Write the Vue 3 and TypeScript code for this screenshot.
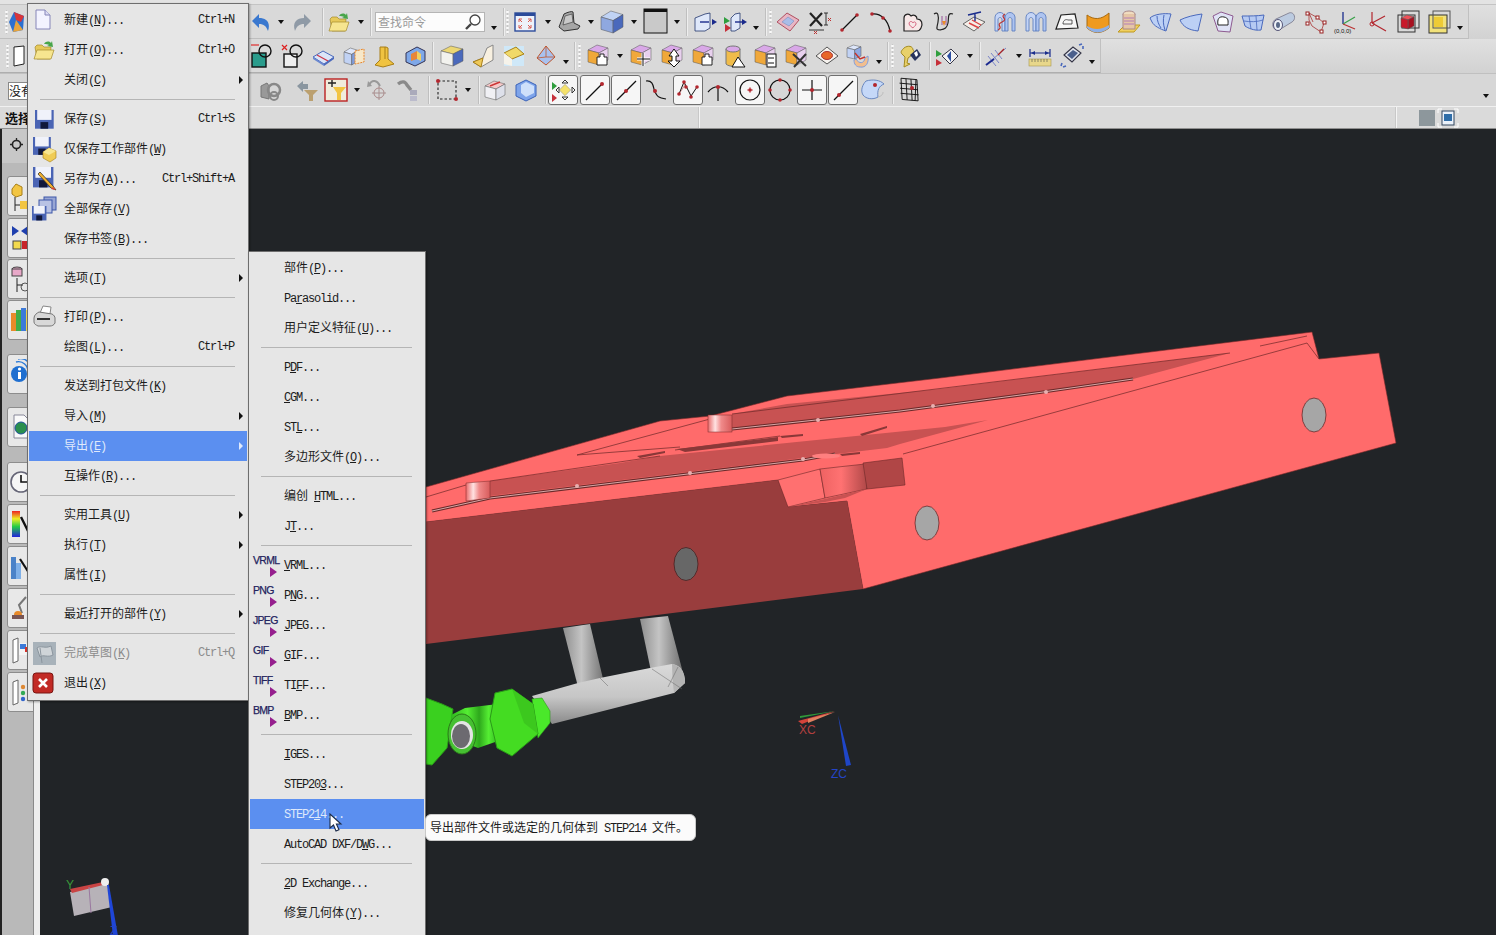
<script setup lang="ts">
type Item = { k: string; c: number; b?: boolean };
type Placed = Item & { ml: number; w: number };

const box = (x: number, y: number, w: number, h: number, top: string, left: string, right: string, d = 5) =>
  `<polygon points="${x},${y + d} ${x + w * 0.55},${y + d * 1.6} ${x + w},${y + d * 0.6} ${x + w * 0.45},${y}" fill="${top}" stroke="#555" stroke-width=".5"/>` +
  `<polygon points="${x},${y + d} ${x + w * 0.55},${y + d * 1.6} ${x + w * 0.55},${y + h} ${x},${y + h - d * 0.6}" fill="${left}" stroke="#555" stroke-width=".5"/>` +
  `<polygon points="${x + w * 0.55},${y + d * 1.6} ${x + w},${y + d * 0.6} ${x + w},${y + h - d} ${x + w * 0.55},${y + h}" fill="${right}" stroke="#555" stroke-width=".5"/>`;
const dot = (x: number, y: number, r = 1.8, f = "#b3262e") => `<circle cx="${x}" cy="${y}" r="${r}" fill="${f}"/>`;
const ln = (d: string, s = "#111", w = 1.2) => `<path d="${d}" fill="none" stroke="${s}" stroke-width="${w}"/>`;
const hand = (x: number, y: number) => `<path d="M${x} ${y + 3}h3v-3h4v3h3v8h-10z" fill="#fff" stroke="#111" stroke-width=".9"/>`;
const folder = `<path d="M3 9l2-2h5l2 2h7l-1 12H5z" fill="#e6c95a" stroke="#a48a2c" stroke-width=".7"/><path d="M2 21l3-9h17l-3 9z" fill="#f6e58f" stroke="#a48a2c" stroke-width=".7"/><path d="M12 6c2-3 5-3 7-1l1-2 1 6-6-1 2-1c-1-1-3-1-5-1z" fill="#48a54a"/>`;
const disk = (x: number, y: number, s = 1) =>
  `<g transform="translate(${x} ${y}) scale(${s})"><rect width="17" height="17" fill="#4a64b4"/><rect x="2" width="13" height="9" fill="#f0f2fa"/><rect x="5" y="11" width="7" height="6" fill="#11183a"/></g>`;
const arrowPanel = (tri: boolean) =>
  (tri ? `<polygon points="1,7 7,11 1,14" fill="#2f9e3e"/><polygon points="2,14 8,18 2,22" fill="#c6303a"/>` : "") +
  `<polygon points="${tri ? 8 : 2},8 12,4 17,3 17,18 12,21 ${tri ? 8 : 2},21" fill="#dfe8fa" stroke="#22356b" stroke-width=".8"/><path d="M${tri ? 12 : 7} 12h9" stroke="#1a2a8c" stroke-width="1.4"/><polygon points="19,9 24,12 19,15" fill="#1a2a8c"/>`;
const bluArch = (x = 0) =>
  `<path d="M${x + 2} 21V7c1-6 9-6 10 0v14h-3V9c-1-2-3-2-4 0v12z" fill="#c5d5f6" stroke="#5f7fc0" stroke-width=".9"/><path d="M${x + 12} 21V7c1-6 9-6 10 0v14h-3V9c-1-2-3-2-4 0v12z" fill="#aec4f0" stroke="#5f7fc0" stroke-width=".9"/>`;

const I: Record<string, string> = {
  undo: `<path d="M3 11l7-7v4c7 0 12 4 9 13-2-5-4-7-9-7v4z" fill="#3a78cf"/>`,
  redo: `<path d="M21 11l-7-7v4c-7 0-12 4-9 13 2-5 4-7 9-7v4z" fill="#8f9aa6"/>`,
  folder,
  logo: `<polygon points="6,2 16,6 15,20 5,22 1,12" fill="#2b6fd0"/><polygon points="6,2 16,6 13,12 8,10" fill="#d8353a"/><polygon points="8,10 15,20 5,22" fill="#e7a43c"/>`,
  page: `<polygon points="4,3 14,2 14,20 4,22" fill="#fff" stroke="#222"/>`,
  fit: `<rect x="2" y="3" width="20" height="18" fill="#eef2fa" stroke="#2b4b9a" stroke-width="1.4"/><rect x="2" y="3" width="20" height="3" fill="#2b4b9a"/>${ln("M6 9l3 3M6 9v3M6 9h3M18 9l-3 3M18 9v3M18 9h-3M6 18l3-3M6 18v-3M6 18h3M18 18l-3-3M18 18v-3M18 18h-3", "#d85a50", 1)}`,
  shade: `<path d="M6 4c4-2 8-3 9-2l1 11 6 3-2 3-14 2-5-4z" fill="#a6a6a6" stroke="#333"/><path d="M7 6l7-2 1 8-10 3z" fill="#c9c9c9" stroke="#333" stroke-width=".6"/>`,
  cube: box(1, 1, 22, 22, "#c0d3f5", "#8fa8e0", "#4a69bc", 6),
  gsq: `<rect x="1" y="-1" width="23" height="24" fill="#c9c9c9" stroke="#111"/><rect x="1" y="-1" width="23" height="3" fill="#111"/>`,
  pan1: arrowPanel(false),
  pan2: arrowPanel(true),
  surf: `<polygon points="1,12 11,3 23,10 14,21" fill="#e7b6c4" stroke="#b05060"/><polygon points="6,12 12,7 18,11 13,16" fill="#a9bde8" stroke="#7a8fc0" stroke-width=".6"/>`,
  xdim: `${ln("M3 3L15 16M15 3L3 16", "#222", 2.2)}${ln("M2 20H17M17 3H21M19 3V15M17 15H21", "#222", .9)}${ln("M21 8l3 3M24 8l-3 3M7 21l3 3M10 21l-3 3", "#b33", 1)}`,
  line: `${ln("M4 20L19 5")}${dot(4, 20)}${dot(19, 5)}`,
  arc: `${ln("M3 4C12 3 19 10 21 21")}${dot(3, 4)}${dot(14, 8)}${dot(21, 21)}`,
  heart: `<path d="M4 21V8c0-4 5-5 7-2 3-2 6 0 6 3 5 0 6 5 4 9-1 2-3 3-4 3z" fill="#f7e8e8" stroke="#222" stroke-width="1.2"/><path d="M9 13c1-2 3-2 4 0 1-2 3-1 3 1s-3 3-3 4c-1-1-4-2-4-5z" fill="none" stroke="#c46" stroke-width=".8"/>`,
  curve: `${ln("M3 4c4-3 5 2 4 8s-3 8 3 8M22 4c-6-2-4 4-5 9s-3 6-8 7", "#222")}${ln("M11 6v9M15 6v9", "#838", .8)}<polygon points="11,11 15,11 13,16" fill="#e88a2a"/>`,
  plane: `<polygon points="1,14 12,7 23,12 12,21" fill="#f5eee8" stroke="#666"/>${ln("M7 13l10 5M10 10l9 5", "#d44", 1.4)}${ln("M6 5l13-3M13 3v8", "#1a2c8c", 1.4)}`,
  arch1: `${bluArch()}${ln("M5 20c6-3-3-5 4-8s-3-5 3-8", "#b33", 1.2)}`,
  arch2: bluArch(),
  para: `<polygon points="1,19 6,5 20,4 23,18" fill="#f7f7f7" stroke="#222" stroke-width="1.2"/>${ln("M8 14c0-4 3-5 5-4h4v4z", "#333", .8)}`,
  osurf: `<path d="M1 5c7 5 14 5 22-2v15c-8 6-15 6-22 0z" fill="#ef9a1f" stroke="#a86a10"/><path d="M1 16c7 4 14 4 22-1v3c-8 6-15 6-22 0z" fill="#8fb0e6"/>`,
  cylp: `<polygon points="1,22 8,15 23,15 17,22" fill="#f0d060" stroke="#c09a20"/><ellipse cx="12" cy="4" rx="6" ry="3" fill="#f0dcc0" stroke="#a88"/><path d="M6 4v15h12V4" fill="#e6c6a6" stroke="#a88"/>${ln("M7 8h10M7 11h10M7 14h10", "#a569bd", .8)}`,
  ribs: `<path d="M2 8c4-4 15-5 21-4l-5 17c-6-2-12-5-14-9z" fill="#bcd0f5" stroke="#4a69bc"/>${ln("M9 6c0 5 2 9 4 12M16 5c-1 5-1 9 1 15", "#4a69bc", 1)}`,
  bsurf: `<path d="M1 10c6-3 14-5 22-6l-4 17C10 20 4 17 1 10z" fill="#bcd0f5" stroke="#4a69bc"/>`,
  msurf: `<polygon points="3,6 11,2 23,6 20,22 8,21" fill="#dfe2f5" stroke="#8d5a90"/><path d="M8 15c-1-6 1-9 6-8s4 4 4 8z" fill="#fff" stroke="#222"/>`,
  mesh: `<path d="M1 6c8 0 15 0 22-1l-3 15C13 21 7 18 4 16z" fill="#b6caf2" stroke="#4a69bc"/>${ln("M8 6l2 13M15 6l1 14M3 11c6 1 13 1 19-1", "#4a69bc", .8)}`,
  tube: `<path d="M4 9L17 3c5-2 8 6 3 9L7 20c-6 2-9-8-3-11z" fill="#bccbe0" stroke="#889"/><ellipse cx="6" cy="15" rx="4.5" ry="5.5" fill="#eef2f8" stroke="#557"/><ellipse cx="6" cy="15" rx="2" ry="3" fill="#5a6a88"/>`,
  pts: `${ln("M6 3l9 5 6 5-3 9-9-6-3-6zM6 3l4 9", "#a33", .8)}<g fill="#fff" stroke="#922" stroke-width="1"><rect x="3" y="2" width="3" height="3"/><rect x="13" y="6" width="3" height="3"/><rect x="20" y="11" width="3" height="3"/><rect x="3" y="12" width="3" height="3"/><rect x="17" y="20" width="3" height="3"/></g>`,
  axes0: `${ln("M9 14V2", "#1a2c8c", 1.3)}${ln("M9 14L21 7", "#39a24a", 1.3)}${ln("M9 14L21 19", "#b33", 1.3)}<text x="0" y="23" class="tiny">(0,0,0)</text>`,
  axesr: `${ln("M7 13V2M7 13L20 6M7 13l14 8", "#b3262e", 1.2)}<circle cx="7" cy="14" r="2" fill="none" stroke="#b3262e"/>`,
  redc: `<rect x="2" y="5" width="17" height="17" fill="none" stroke="#333"/><rect x="6" y="1" width="17" height="17" fill="none" stroke="#333"/>${box(5, 5, 13, 14, "#f25058", "#c9182a", "#a81020", 3)}`,
  yelc: `<rect x="2" y="5" width="18" height="18" fill="#f2e27a" stroke="#333"/><rect x="6" y="1" width="17" height="17" fill="none" stroke="#555"/><rect x="7" y="7" width="9" height="10" fill="#eecb35"/>`,
  r2a: `<rect x="2" y="9" width="14" height="14" fill="#2a9c8c" stroke="#111" stroke-width="1.4"/><circle cx="15" cy="7" r="6" fill="none" stroke="#111" stroke-width="1.4"/>${ln("M1 1l8 0", "#d44", 1.4)}`,
  r2b: `<rect x="3" y="10" width="13" height="13" fill="#eee" stroke="#111" stroke-width="1.4"/><circle cx="15" cy="7" r="6" fill="none" stroke="#111" stroke-width="1.4"/>${ln("M1 1l5 5M6 1L1 6", "#d22", 1.2)}`,
  r2c: `<polygon points="2,13 12,7 23,13 13,20" fill="#dbe5f8" stroke="#4a69bc"/>${ln("M6 11l11 6", "#c34", 1.2)}<polygon points="2,13 13,20 13,22 2,15" fill="#6a88d0"/><polygon points="13,20 23,13 23,15 13,22" fill="#4a69bc"/>`,
  r2d: `${box(2, 4, 14, 17, "#dde6fa", "#c1d2f4", "#7f9ddd", 4)}<g stroke="#e8862a" stroke-dasharray="2 1" fill="#f7e7c8" stroke-width="1"><polygon points="13,7 22,5 22,18 13,20"/></g>`,
  r2e: `<path d="M8 3h6l2 1v11l6 5-11 3-8-2 5-5z" fill="#f0c341" stroke="#a87f18"/>${ln("M13 3v12", "#a87f18", 1)}`,
  r2f: `<polygon points="3,9 14,3 22,7 22,17 12,22 3,18" fill="#7fa8e8" stroke="#335"/><polygon points="8,10 14,7 14,15 8,17" fill="#e8863a"/><polygon points="14,7 18,10 18,17 14,15" fill="#f2d060"/>`,
  r2g: box(1, 2, 22, 20, "#ecd774", "#f2f2ee", "#4a69bc", 5),
  r2h: `<polygon points="12,14 16,4 22,1 22,16 10,23 2,18" fill="#f8f0e0" stroke="#888"/><polygon points="2,18 12,14 10,23" fill="#eec95a" stroke="#a87f18"/>`,
  r2i: `<rect x="2" y="2" width="20" height="20" fill="#cfe8f8"/><polygon points="2,9 14,3 22,10 10,15" fill="#f0d968" stroke="#a87f18"/><polygon points="2,9 10,15 10,22 2,20" fill="#f6f3ea"/>`,
  r2j: `<polygon points="4,14 13,2 22,13 13,21" fill="#a9c1ee" stroke="#c0552a"/>${ln("M13 2v11M4 14l9-1 9 0", "#c0552a", .8)}`,
  cb1: box(2, 1, 20, 20, "#d9a8e8", "#f0a83a", "#e8d0ee", 5) + hand(11, 10),
  cb2: box(2, 1, 20, 20, "#d9a8e8", "#f0a83a", "#e8d0ee", 5) + ln("M14 9v13M8 15h13", "#fff", 3) + ln("M14 9v13M8 15h13", "#111", 1),
  cb3: box(2, 1, 20, 20, "#d9a8e8", "#f0a83a", "#e8d0ee", 5) + `<path d="M14 5l5 7h-3v5h4l-6 6-6-6h4v-5h-3z" fill="#fff" stroke="#111"/>`,
  cyl: `<path d="M4 5v15c3 3 11 3 14 0V5" fill="#f0bc4a" stroke="#777"/><ellipse cx="11" cy="5" rx="7" ry="3" fill="#d9a8e8" stroke="#777"/><polygon points="16,13 23,23 10,23" fill="#fff" stroke="#111"/>`,
  cb4: box(2, 1, 20, 20, "#d9a8e8", "#f0a83a", "#e8d0ee", 5) + `<rect x="14" y="10" width="9" height="13" fill="#fff" stroke="#111"/>` + ln("M15 14h6M21 19h-6", "#111", 1),
  cb5: box(2, 1, 20, 20, "#d9a8e8", "#f0a83a", "#e8d0ee", 5) + ln("M9 10l13 12M22 10L10 23", "#333", 2),
  eye: `<polygon points="1,12 12,3 23,12 12,20" fill="#f6f2ee" stroke="#555"/><ellipse cx="12" cy="11.5" rx="5.5" ry="4" fill="#e8672a" stroke="#a33"/>`,
  r2k: `${box(1, 1, 14, 14, "#dde6fa", "#c1d2f4", "#8fa8e0", 3)}<path d="M10 15c3 5 8 5 9-1l3-2c1 7-2 12-8 11-4 0-6-3-6-7z" fill="#f2be8e" stroke="#7f9ddd"/>${ln("M9 9l5 6 5-2", "#c8322a", 1.4)}`,
  key: `<path d="M6 4c4-3 9-2 9 2 2 1 1 4-1 5l-4 3-1 5 3 1-6 3 1-10-3-3c-2-2 0-4 2-6z" fill="#e8d06a" stroke="#a38a20"/><polygon points="12,11 19,5 23,11 17,17" fill="#28345c"/><polygon points="16,9 19,7 20,11 18,13" fill="#fff"/>`,
  tp: `<polygon points="1,6 7,10 1,13" fill="#2f9e3e"/><polygon points="1,15 7,19 1,22" fill="#c6303a"/><polygon points="7,12 16,5 23,12 15,20" fill="#f4f4f4" stroke="#334"/><polygon points="12,12 16,7 16,18" fill="#2b4ea0"/>`,
  ax: `${ln("M2 21L22 4M4 12l8 10M7 9l8 10M11 6l7 9", "#7a84c8", 1)}${ln("M2 21L10 15", "#1c2a90", 2)}${ln("M14 11l6-6", "#a22", 1.2)}`,
  ruler: `${ln("M2 9h20M2 5v8M22 5v8", "#1a2c8c", 1.2)}<polygon points="3,9 7,7 7,11" fill="#1a2c8c"/><polygon points="21,9 17,7 17,11" fill="#1a2c8c"/><rect x="1" y="15" width="22" height="7" fill="#e8d78a" stroke="#a79750" stroke-width=".6"/>${ln("M4 15v3M7 15v3M10 15v3M13 15v3M16 15v3M19 15v3", "#665", .7)}`,
  rot: `<polygon points="4,11 13,3 21,9 12,18" fill="#dfe3ec" stroke="#334" stroke-width="1.1"/><polygon points="7,11 13,6 18,9 12,15" fill="#4a5f8c"/>${ln("M2 19l-1 3M6 22l-3 1M19 1l3-1M23 5l0-3", "#4a69bc", 1.6)}`,
  gy1: `<path d="M2 8l6-3 2 3v13l-8-2z" fill="#999" stroke="#777"/><circle cx="15" cy="12" r="6" fill="none" stroke="#888" stroke-width="2.5"/><circle cx="15" cy="18" r="4" fill="none" stroke="#888" stroke-width="2"/>`,
  gy2: `<path d="M2 8l6-5v3h5v5H8v3z" fill="#8a96a0"/><polygon points="9,12 23,12 18,17 18,23 14,23 14,17" fill="#bba070"/>`,
  sel: `<rect x="1" y="1" width="22" height="22" fill="#f0ecdc" stroke="#b22" stroke-width="1.4"/><polygon points="9,9 22,9 17,15 17,22 13,22 13,15" fill="#f2c542"/>${ln("M8 2v7M4 5h8", "#222", 1.4)}`,
  gy3: `${ln("M3 7c3-6 8-5 11 1", "#999", 2)}<polygon points="2,3 6,8 1,9" fill="#999"/><circle cx="13" cy="15" r="5" fill="none" stroke="#aa8888"/>${ln("M13 8v14M6 15h14", "#a89090", 1)}`,
  gy4: `${ln("M2 6c4-3 7-3 9 1l4 5", "#8a8a8a", 3.4)}<rect x="14" y="12" width="7" height="5" fill="#aab"/><rect x="14" y="18" width="7" height="5" fill="#bbc"/>`,
  dash: `<rect x="3" y="3" width="18" height="18" fill="none" stroke="#222" stroke-dasharray="2.5 2" stroke-width="1.1"/>${dot(3, 3, 2)}${dot(21, 21, 2)}`,
  wb: box(2, 3, 20, 19, "#f6c8c8", "#f0f0f4", "#dde0ea", 5) + ln("M7 8l10-4", "#c33", 1.5),
  bb: `<polygon points="2,7 12,2 22,7 22,18 12,23 2,18" fill="#7ea4ea" stroke="#3a62b8"/><polygon points="7,7 12,4 20,8 20,15 12,19 7,15" fill="#cfe0fa"/>`,
  snap: `<polygon points="1,4 6,8 1,12" fill="#2f9e3e"/><polygon points="1,16 6,20 1,24" fill="#c6303a"/><rect x="10" y="8" width="8" height="8" transform="rotate(45 14 12)" fill="#f4e16a" stroke="#999" stroke-width=".6"/>${ln("M14 2l3 3h-6zM14 22l3-3h-6zM24 12l-3-3v6zM5 12l3-3v6z", "#222", .9)}`,
  ln1: `${ln("M3 22L19 6")}${dot(19, 6, 2)}`,
  ln2: `${ln("M3 22L22 3")}${dot(12, 13, 2)}`,
  sc: `${ln("M2 3c8-1 7 7 9 11s3 6 11 7")}${dot(11, 13, 2)}`,
  zig: `${ln("M3 16L8 4l7 14 6-9", "#111", 1)}${ln("M3 16c5-8 6-7 5-12", "#a33", .5)}${dot(3, 16, 1.8)}${dot(8, 4, 1.8)}${dot(15, 19, 1.8)}${dot(21, 9, 1.8)}${dot(10, 9, 1.8)}`,
  arcp: `${ln("M2 14C8 7 16 7 22 14M12 8v15")}${dot(12, 9, 2)}`,
  cir: `<circle cx="12" cy="12" r="10" fill="none" stroke="#111" stroke-width="1.2"/>${dot(12, 12, 1.8)}${ln("M9 12h6M12 9v6", "#b3262e", .7)}`,
  cirq: `<circle cx="12" cy="12" r="10" fill="none" stroke="#111" stroke-width="1.2"/>${dot(12, 2)}${dot(12, 22)}${dot(2, 12)}${dot(22, 12)}`,
  cross: `${ln("M12 2v20M2 12h20")}${dot(12, 12, 2)}`,
  ln3: `${ln("M3 22L22 3")}${dot(8, 17, 2)}`,
  surfp: `<path d="M5 3c7-2 14-1 18 3-5 2-7 6-6 13-5 3-12 2-15-2-3-5 0-11 3-14z" fill="#c5d8f8" stroke="#6a88c0"/><path d="M17 19c4-1 5-3 5-5" fill="none" stroke="#bbb"/>${dot(14, 7, 2)}`,
  grid: `<g transform="rotate(5 12 12)">${ln("M3 1h16l3 21H6zM2 6h18M3 11h18M4 16h18M8 1l3 21M13 1l3 21M18 1l1 21", "#111", .9)}</g>${dot(15, 10, 2)}`,
};

const widthOf = (i: Item) =>
  i.k === "dd" || i.k === "ddl" ? 6 : i.k === "sep" ? 1 : i.k === "grip" ? 3 : i.k === "search" ? 110 : i.b ? 30 : 24;
const place = (list: Item[]): Placed[] => {
  let end = 0;
  return list.map((it) => {
    const w = widthOf(it);
    const ml = it.c - w / 2 - end;
    end = it.c + w / 2;
    return { ...it, ml, w };
  });
};
const seq = (start: number, names: string[], step = 31): Item[] => names.map((k, i) => ({ k, c: start + i * step }));
const row1 = place([
  { k: "grip", c: 6 }, { k: "logo", c: 20 },
  { k: "undo", c: 261 }, { k: "dd", c: 281 }, { k: "redo", c: 302 }, { k: "sep", c: 322 },
  { k: "folder", c: 339 }, { k: "dd", c: 361 }, { k: "sep", c: 370 }, { k: "search", c: 430 }, { k: "ddl", c: 494 },
  { k: "sep", c: 503 }, { k: "grip", c: 507 }, { k: "fit", c: 525 }, { k: "dd", c: 548 }, { k: "shade", c: 570 },
  { k: "dd", c: 591 }, { k: "cube", c: 612 }, { k: "dd", c: 634 }, { k: "gsq", c: 655 }, { k: "dd", c: 677 },
  { k: "sep", c: 686 }, { k: "pan1", c: 705 }, { k: "pan2", c: 735 }, { k: "ddl", c: 756 }, { k: "sep", c: 765 }, { k: "grip", c: 770 },
  ...seq(788, ["surf", "xdim", "line", "arc", "heart", "curve", "plane", "arch1", "arch2", "para", "osurf", "cylp", "ribs", "bsurf", "msurf", "mesh", "tube", "pts", "axes0", "axesr", "redc", "yelc"]),
  { k: "ddl", c: 1460 },
]);
const row2 = place([
  { k: "grip", c: 7 }, { k: "page", c: 22 },
  ...seq(262, ["r2a", "r2b", "r2c", "r2d", "r2e", "r2f"], 30.6), { k: "sep", c: 433 },
  ...seq(452, ["r2g", "r2h", "r2i", "r2j"]), { k: "ddl", c: 566 }, { k: "sep", c: 575 }, { k: "grip", c: 580 },
  { k: "cb1", c: 598 }, { k: "dd", c: 620 },
  ...seq(641, ["cb2", "cb3", "cb1", "cyl", "cb4", "cb5", "eye", "r2k"]), { k: "ddl", c: 879 }, { k: "sep", c: 888 }, { k: "grip", c: 893 },
  { k: "key", c: 910 }, { k: "sep", c: 930 }, { k: "tp", c: 947 }, { k: "dd", c: 970 }, { k: "sep", c: 980 },
  { k: "ax", c: 996 }, { k: "dd", c: 1019 }, { k: "ruler", c: 1040 }, { k: "rot", c: 1072 }, { k: "ddl", c: 1092 },
]);
const row3 = place([
  { k: "gy1", c: 271 }, { k: "gy2", c: 307 }, { k: "sel", c: 336 }, { k: "dd", c: 357 }, { k: "gy3", c: 378 }, { k: "gy4", c: 408 },
  { k: "sep", c: 428 }, { k: "dash", c: 447 }, { k: "dd", c: 468 }, { k: "sep", c: 478 }, { k: "wb", c: 495 }, { k: "bb", c: 526 }, { k: "sep", c: 545 },
  { k: "snap", c: 563, b: true }, { k: "ln1", c: 595, b: true }, { k: "ln2", c: 626, b: true }, { k: "sc", c: 656 },
  { k: "zig", c: 688, b: true }, { k: "arcp", c: 718 }, { k: "cir", c: 750, b: true }, { k: "cirq", c: 780 },
  { k: "cross", c: 812, b: true }, { k: "ln3", c: 843, b: true }, { k: "surfp", c: 873 }, { k: "sep", c: 892 }, { k: "grid", c: 909 },
  { k: "ddl", c: 1486 },
]);
const bars = [
  { cls: "bar b1", items: row1 },
  { cls: "bar b2", items: row2 },
  { cls: "bar b3", items: row3 },
];

const seg = (s: string) => {
  const out: { t: string; c: string }[] = [];
  const re = /[\u3000-\u9fff]+|_.|[^\u3000-\u9fff_]+/g;
  for (const m of s.match(re) ?? []) {
    if (m[0] === "_") out.push({ t: m[1], c: "lat und" });
    else if (/[\u3000-\u9fff]/.test(m)) out.push({ t: m, c: "cjk" });
    else out.push({ t: m, c: "lat" });
  }
  return out;
};
const t = (m: string, s = "", ex = {}) => ({ kind: "item", label: seg(m), short: s, ...ex }) as MenuRow;
type MenuRow = { kind: string; label: { t: string; c: string }[]; short: string; arrow?: boolean; hl?: boolean; dim?: boolean; icon?: string; fmt?: string };
const sp: MenuRow = { kind: "sep", label: [], short: "" };

const saveWork = disk(1, 0, 1.05) + `<polygon points="11,15 17,11 24,14 24,21 18,25 11,21" fill="#f0cc55" stroke="#a87f18" stroke-width=".6"/><polygon points="11,15 17,18 24,14 17,11" fill="#f8e690"/>`;
const saveAs = disk(1, 0, 1.2) + `<path d="M8 5l13 14 3 4-5-2L6 7z" fill="#f0b030" stroke="#222" stroke-width=".7"/><polygon points="21,20 24,23 19,22" fill="#d43"/>`;
const saveAll = `<rect x="12" y="0" width="12" height="13" fill="#98a6d4" stroke="#3c56a8"/>` + `<rect x="7" y="3" width="13" height="13" fill="#b8c2e4" stroke="#3c56a8"/>` + disk(0, 9, .85);
const printer = `<polygon points="8,8 11,1 19,2 18,9" fill="#fff" stroke="#888"/><path d="M2 13c0-3 3-5 5-6l13 2c2 1 3 3 3 4v5c-1 2-3 3-5 3H6c-2-1-4-2-4-4z" fill="#d8d8d8" stroke="#777"/><rect x="5" y="13" width="13" height="2" fill="#333"/>`;
const sketch = `<rect x="1" y="1" width="23" height="23" fill="#a8b2ba"/><path d="M5 7c4-3 8 1 14-2l2 9c-5 3-10-1-13 2z" fill="#cfd4d8" stroke="#8b959e"/><path d="M8 7l2 15" stroke="#8b959e"/>`;
const exitI = `<rect x="1" y="2" width="20" height="20" rx="3" fill="#c22a25" stroke="#7a1512"/>${ln("M7 8l8 8M15 8l-8 8", "#fff", 2.6)}`;
const newDoc = `<path d="M4 2h9l5 5v14H4z" fill="#f3f3ff" stroke="#8686b8"/><path d="M13 2v5h5" fill="#dcdcf4" stroke="#8686b8"/>`;

const menu1: MenuRow[] = [
  t("新建(_N)...", "Ctrl+N", { icon: newDoc }), t("打开(_O)...", "Ctrl+O", { icon: folder }), t("关闭(_C)", "", { arrow: true }), sp,
  t("保存(_S)", "Ctrl+S", { icon: disk(3, 3, 1.1) }), t("仅保存工作部件(_W)", "", { icon: saveWork }), t("另存为(_A)...", "Ctrl+Shift+A", { icon: saveAs }), t("全部保存(_V)", "", { icon: saveAll }), t("保存书签(_B)..."), sp,
  t("选项(_T)", "", { arrow: true }), sp,
  t("打印(_P)...", "", { icon: printer }), t("绘图(_L)...", "Ctrl+P"), sp,
  t("发送到打包文件(_K)"), t("导入(_M)", "", { arrow: true }), t("导出(_E)", "", { arrow: true, hl: true }), t("互操作(_R)..."), sp,
  t("实用工具(_U)", "", { arrow: true }), t("执行(_T)", "", { arrow: true }), t("属性(_I)"), sp,
  t("最近打开的部件(_Y)", "", { arrow: true }), sp,
  t("完成草图(_K)", "Ctrl+Q", { dim: true, icon: sketch }), t("退出(_X)", "", { icon: exitI }),
];
const menu2: MenuRow[] = [
  t("部件(_P)..."), t("Pa_rasolid..."), t("用户定义特征(_U)..."), sp,
  t("P_DF..."), t("_CGM..."), t("ST_L..."), t("多边形文件(_O)..."), sp,
  t("编创 _HTML..."), t("J_T..."), sp,
  t("_VRML...", "", { fmt: "VRML" }), t("P_NG...", "", { fmt: "PNG" }), t("_JPEG...", "", { fmt: "JPEG" }), t("_GIF...", "", { fmt: "GIF" }), t("TI_FF...", "", { fmt: "TIFF" }), t("_BMP...", "", { fmt: "BMP" }), sp,
  t("_IGES..."), t("STEP20_3..."), t("STEP2_14...", "", { hl: true }), t("AutoCAD DXF/D_WG..."), sp,
  t("_2D Exchange..."), t("修复几何体(_Y)..."),
];
const tip = seg("导出部件文件或选定的几何体到 STEP214 文件。");

const tabs = [
  { mt: 0, ic: `<polygon points="2,8 6,3 12,6 12,14 6,16 2,13" fill="#f2c542" stroke="#a87f18"/>${ln("M5 16v14M5 24h7", "#222", 1)}<rect x="10" y="20" width="8" height="8" fill="#f2c542"/>` },
  { mt: 2, ic: `<polygon points="2,3 9,8 2,13" fill="#1f3fae"/><polygon points="18,3 11,8 18,13" fill="#1f3fae"/><rect x="3" y="18" width="8" height="8" fill="#f2d94c" stroke="#444"/><rect x="12" y="18" width="7" height="8" fill="#c8262a"/>` },
  { mt: 1, ic: `<ellipse cx="7" cy="5" rx="5" ry="2" fill="#e8a8c8" stroke="#444"/><rect x="2" y="5" width="10" height="7" fill="#e8a8c8" stroke="#444"/>${ln("M7 14v14M7 21h6", "#222", 1)}<circle cx="15" cy="23" r="4" fill="none" stroke="#555"/>` },
  { mt: 1, ic: `<rect x="1" y="8" width="5" height="18" fill="#e88a2a"/><rect x="6" y="5" width="5" height="21" fill="#3fae49"/><rect x="11" y="3" width="5" height="23" fill="#3c7ad8"/><rect x="16" y="5" width="5" height="21" fill="#f2d94c"/>` },
  { mt: 14, ic: `<circle cx="9" cy="15" r="8" fill="#1f6fd0"/><rect x="8" y="13" width="3" height="7" fill="#fff"/><circle cx="9.5" cy="10" r="1.6" fill="#fff"/>${ln("M6 3c7-2 12 4 12 10M8 0c8-2 14 5 14 12", "#2b7ad8", 1.4)}` },
  { mt: 13, ic: `<path d="M4 3h10l4 4v19H4z" fill="#fafafa" stroke="#889"/><circle cx="11" cy="16" r="6" fill="#2a8f4f" stroke="#1f4f9a"/>` },
  { mt: 15, ic: `<circle cx="11" cy="15" r="10" fill="#f6f6f6" stroke="#667" stroke-width="1.6"/>${ln("M11 8v7h6", "#111", 1.6)}` },
  { mt: 2, ic: `<rect x="2" y="2" width="8" height="26" fill="url(#rb)"/>${ln("M11 8l7 14", "#111", 2.4)}` },
  { mt: 2, ic: `<rect x="1" y="6" width="5" height="22" fill="#4a82c8"/><rect x="6" y="12" width="5" height="16" fill="#7fb0e8"/>${ln("M10 8l9 14", "#111", 2.2)}` },
  { mt: 2, ic: `${ln("M16 4l-7 8 3 8", "#777", 2)}<circle cx="8" cy="22" r="4" fill="#e88a2a"/><rect x="2" y="22" width="12" height="4" fill="#775555"/>` },
  { mt: 2, ic: `<polygon points="3,5 8,3 8,26 3,28" fill="#fff" stroke="#666"/><rect x="9" y="8" width="12" height="12" fill="#f4f4f4"/><rect x="10" y="9" width="6" height="5" fill="#3c7ad8"/><rect x="15" y="12" width="6" height="5" fill="#d8322a"/>` },
  { mt: 2, ic: `<polygon points="3,5 8,3 8,26 3,28" fill="#fff" stroke="#666"/><circle cx="13" cy="10" r="2.2" fill="#d83"/><circle cx="13" cy="16" r="2.2" fill="#3a5"/><circle cx="13" cy="22" r="2.2" fill="#36c"/>` },
];
</script>

<template>
  <div class="app">
    <div class="strip"></div>
    <div v-for="(bar, bi) in bars" :key="bi" class="rowwrap">
      <div :class="bar.cls">
        <template v-for="(it, i) in bar.items" :key="i">
          <span v-if="it.k === 'dd' || it.k === 'ddl'" :class="['dd', it.k === 'ddl' ? 'low' : '']" :style="{ marginLeft: it.ml + 'px' }"></span>
          <span v-else-if="it.k === 'sep'" class="sep" :style="{ marginLeft: it.ml + 'px' }"></span>
          <span v-else-if="it.k === 'grip'" class="grip" :style="{ marginLeft: it.ml + 'px' }"></span>
          <div v-else-if="it.k === 'search'" class="search" :style="{ marginLeft: it.ml + 'px' }">
            <span class="stxt">查找命令</span>
            <svg width="18" height="18" viewBox="0 0 18 18"><circle cx="11" cy="7" r="5" fill="#fff" stroke="#444" stroke-width="1.3" /><path d="M7 11l-5 5" stroke="#444" stroke-width="2.4" /></svg>
          </div>
          <svg v-else :class="['ic', it.b ? 'boxed' : '']" viewBox="0 0 24 24" :style="{ marginLeft: it.ml + 'px' }" v-html="I[it.k]"></svg>
        </template>
        <div v-if="bi === 2" class="noinput">没有</div>
      </div>
    </div>
    <div class="cue">
      <span class="cuetxt">选择</span>
      <span class="cuediv a"></span>
      <span class="cuediv b"></span>
      <span class="vbtn gr"></span>
      <svg class="vbtn2" width="22" height="20" viewBox="0 0 22 20"><path d="M1 5V1h4M17 1h4v4M21 15v4h-4M5 19H1v-4" fill="none" stroke="#fff" /><rect x="5" y="3" width="12" height="14" fill="#eaf1fa" stroke="#33475f" /><rect x="7" y="6" width="8" height="7" fill="#2f6da8" /></svg>
    </div>
    <div class="body">
      <aside class="left">
        <div class="res">
          <svg class="gear" width="13" height="13" viewBox="0 0 16 16"><circle cx="8" cy="8" r="5" fill="none" stroke="#222" stroke-width="2" /><path d="M8 0v3M8 13v3M0 8h3M13 8h3" stroke="#222" stroke-width="1.6" /></svg>
          <div v-for="(tb, i) in tabs" :key="i" class="tab" :style="{ marginTop: tb.mt + 'px' }">
            <svg width="24" height="32" viewBox="0 0 24 32" v-html="tb.ic"></svg>
          </div>
        </div>
        <div class="edge"></div>
      </aside>
      <main class="view">
        <svg class="scene" viewBox="40 128 1456 807" width="1456" height="807">
          <defs>
            <linearGradient id="rb" x1="0" x2="0" y1="0" y2="1"><stop offset="0" stop-color="#e22" /><stop offset=".3" stop-color="#ee2" /><stop offset=".6" stop-color="#2c4" /><stop offset="1" stop-color="#22d" /></linearGradient>
            <linearGradient id="pv"><stop offset="0" stop-color="#8e8e8e" /><stop offset=".45" stop-color="#c4c4c4" /><stop offset="1" stop-color="#727272" /></linearGradient>
            <linearGradient id="ph" x1="0" x2="0" y1="0" y2="1"><stop offset="0" stop-color="#dadada" /><stop offset=".55" stop-color="#c6c6c6" /><stop offset="1" stop-color="#8a8a8a" /></linearGradient>
            <linearGradient id="gr" x1="0" x2="1"><stop offset="0" stop-color="#2fb81e" /><stop offset=".35" stop-color="#55ee33" /><stop offset=".6" stop-color="#2ea81c" /><stop offset=".8" stop-color="#55ee33" /><stop offset="1" stop-color="#2fb81e" /></linearGradient>
            <linearGradient id="nt"><stop offset="0" stop-color="#e86a6a" /><stop offset=".3" stop-color="#ffe2e2" /><stop offset=".55" stop-color="#f08a8a" /><stop offset="1" stop-color="#d85c5c" /></linearGradient>
            <linearGradient id="cy"><stop offset="0" stop-color="#ee6262" /><stop offset=".45" stop-color="#ff7272" /><stop offset="1" stop-color="#b04848" /></linearGradient>
          </defs>
          <!-- pipes -->
          <polygon points="563,627 590,623 604,682 578,686" fill="url(#pv)" />
          <polygon points="640,618 668,615 682,668 652,675" fill="url(#pv)" />
          <path d="M532,695 L578,682 L600,677 L650,667 L672,663 Q685,665 685,682 L674,692 L552,723 Z" fill="url(#ph)" />
          <path d="M672,663 Q685,665 685,682 L674,692 Q672,678 672,663Z" fill="#b4b4b4" />
          <path d="M652,668l30,20M678,666l-10,20M600,677l8,8" stroke="#666" stroke-width=".5" fill="none" />
          <!-- green fittings -->
          <polygon points="426,697 442,703 453,708 447,747 432,764 426,763" fill="#3ad01f" stroke="#2a9a18" />
          <path d="M451 714l14-7 33-4v37l-20 7-26-10z" fill="url(#gr)" />
          <polygon points="532,698 542,697 550,710 550,722 538,737" fill="#4ae82a" stroke="#2a9a18" stroke-width=".6" />
          <polygon points="495,692 512,688 533,703 538,733 512,755 497,747 490,718" fill="#44dc22" stroke="#2a9a18" />
          <polygon points="512,688 533,703 538,733 524,722" fill="#3cc81e" />
          <ellipse cx="462" cy="733" rx="14" ry="20" fill="#46c032" stroke="#2a7a18" />
          <ellipse cx="462" cy="734" rx="11" ry="14" fill="#e4e4e4" />
          <ellipse cx="461" cy="735" rx="9" ry="12" fill="#6c6a70" />
          <!-- plate -->
          <polygon points="426,486 660,420 710,415 787,395 940,377 1312,331 1319,358 1379,352 1396,442 863,588 847,500 788,506 778,479 426,521" fill="#ff6b6b" stroke="#7a2a2a" stroke-width=".6" />
          <polygon points="426,521 778,479 788,506 847,500 863,588 426,643" fill="#993d3d" />
          <polygon points="490,480 620,462 660,455 945,426 988,419 900,443 887,447 803,457 490,495" fill="#c85252" />
          <polygon points="732,413 787,403 940,388 1230,352 1133,378 1043,392 900,410 820,420 732,428" fill="#c85252" />
          <polyline points="432,510 490,497 803,459 835,453" fill="none" stroke="#6b2a2a" stroke-width="3.2" />
          <polyline points="432,510 490,497 803,459 835,453" fill="none" stroke="#d8a8a8" stroke-width="1" />
          <polyline points="732,428 900,410 1043,391 1133,378" fill="none" stroke="#6b2a2a" stroke-width="3.2" />
          <polyline points="732,428 900,410 1043,391 1133,378" fill="none" stroke="#d8a8a8" stroke-width="1" />
          <path d="M577 454L710 418M577 454L680 446M675 449L780 435M426 496L466 484M903 453L1307 342L1319 358M1260 345L1307 335M490 480L660 455M732 413L1230 352" stroke="#6d2828" stroke-width=".7" fill="none" />
          <path d="M677 448L778 436L778 440L685 451zM780 435L803 433L803 435L782 437zM637 455L665 450L665 452L640 457zM860 433L887 425L887 427L862 435zM840 453L860 451L860 453L842 455z" fill="#8a3838" />
          <circle cx="577" cy="485" r="2" fill="#e8b0b0" /><circle cx="690" cy="472" r="2" fill="#e8b0b0" /><circle cx="803" cy="458" r="2" fill="#e8b0b0" />
          <circle cx="818" cy="419" r="2" fill="#e8b0b0" /><circle cx="933" cy="405" r="2" fill="#e8b0b0" /><circle cx="1046" cy="391" r="2" fill="#e8b0b0" />
          <ellipse cx="826" cy="455" rx="14" ry="2.5" fill="#ff7f7f" />
          <polygon points="466,482 490,480 490,497 466,500" fill="url(#nt)" stroke="#7a2a2a" stroke-width=".5" />
          <rect x="708" y="414" width="24" height="17" fill="url(#nt)" stroke="#7a2a2a" stroke-width=".5" />
          <polygon points="778,479 820,468 825,497 788,506" fill="#ff7070" stroke="#6d2828" stroke-width=".6" />
          <polygon points="820,468 865,463 867,488 825,497" fill="url(#cy)" stroke="#6d2828" stroke-width=".6" />
          <polygon points="863,462 902,457 905,484 867,488" fill="#b04646" stroke="#6d2828" stroke-width=".6" />
          <polygon points="788,506 825,498 867,488 845,497 825,501" fill="#c85252" />
          <ellipse cx="686" cy="563" rx="12" ry="16.5" fill="#676767" stroke="#4a2020" stroke-width=".8" />
          <ellipse cx="927" cy="522" rx="12" ry="17" fill="#a6a6a6" stroke="#6d2828" stroke-width=".8" />
          <ellipse cx="1314" cy="414" rx="12" ry="17" fill="#a6a6a6" stroke="#6d2828" stroke-width=".8" />
          <!-- triads -->
          <polygon points="835,710 798,720 802,723" fill="#d4433a" />
          <polygon points="835,710 800,715 800,717" fill="#2f9a3a" />
          <polygon points="835,711 808,718 808,722" fill="#e08060" />
          <polygon points="838,714 851,764 846,765" fill="#1f46c8" />
          <text x="799" y="733" class="tri xc">XC</text>
          <text x="831" y="777" class="tri zc">ZC</text>
          <polygon points="70,891 108,882 112,906 74,915" fill="#b7b2b8" />
          <polygon points="70,888 103,881 103,884 72,892" fill="#c94444" />
          <path d="M89 886l2 26" stroke="#9a78a0" fill="none" />
          <circle cx="105" cy="881" r="4" fill="#eee" />
          <polygon points="107,884 109,884 118,935 113,935" fill="#1f46d8" />
          <text x="66" y="888" class="tri yc">Y</text>
          <text x="110" y="934" class="tri zc">Z</text>
        </svg>
      </main>
    </div>

    <nav class="menu m1">
      <template v-for="(r, i) in menu1" :key="i">
        <div v-if="r.kind === 'sep'" class="msep"></div>
        <div v-else :class="['mi', { hl: r.hl, dim: r.dim }]">
          <svg v-if="r.icon" class="mic" viewBox="0 0 24 24" v-html="r.icon"></svg>
          <span class="ml"><span v-for="(s, j) in r.label" :key="j" :class="s.c">{{ s.t }}</span></span>
          <span v-if="r.short" class="ms lat">{{ r.short }}</span>
          <span v-if="r.arrow" class="ma"></span>
        </div>
      </template>
    </nav>
    <nav class="menu m2">
      <template v-for="(r, i) in menu2" :key="i">
        <div v-if="r.kind === 'sep'" class="msep"></div>
        <div v-else :class="['mi', { hl: r.hl }]">
          <div v-if="r.fmt" class="fmt"><span class="ft">{{ r.fmt }}</span><span class="ftri"></span></div>
          <span class="ml"><span v-for="(s, j) in r.label" :key="j" :class="s.c">{{ s.t }}</span></span>
        </div>
      </template>
    </nav>
    <div class="tip"><span v-for="(s, j) in tip" :key="j" :class="s.c">{{ s.t }}</span></div>
    <svg class="cursor" width="14" height="20" viewBox="0 0 14 20"><path d="M1 1v14l3.5-3 2.5 6 3-1.3-2.6-5.7H12z" fill="#fff" stroke="#1c2c4a" stroke-width="1.1" /></svg>
  </div>
</template>

<style>
html, body { margin: 0; background: #212427; }
</style>
<style scoped>
.app { position: relative; width: 1496px; height: 935px; overflow: hidden; display: flex; flex-direction: column; font-family: "Noto Sans CJK SC", "Liberation Mono", sans-serif; background: #dfdfdf; }
.strip { height: 4px; background: #e3e3e3; border-bottom: 1px solid #c4c4c4; flex: none; }
.rowwrap { flex: none; height: 34px; background: linear-gradient(#e0e0e0, #d2d2d2); }
.bar { position: relative; height: 33px; display: flex; align-items: center; background: #d9d9d9; border-bottom: 1px solid #bebebe; }
.b1 { width: 1468px; border-right: 1px solid #c0c0c0; }
.b2 { width: 1100px; border-right: 1px solid #c0c0c0; border-bottom: 1px solid #aeaeae; }
.b3 { width: 100%; background: #d7d7d7; border-top: 1px solid #c0c0c0; height: 32px; }
.ic { flex: none; width: 24px; height: 24px; overflow: visible; }
.ic :deep(.tiny) { font: 6px "Liberation Sans", sans-serif; fill: #111; }
.boxed { width: 30px; height: 30px; padding: 2px; box-sizing: border-box; background: #f6f6f6; border: 1px solid #6f6f6f; border-radius: 3px; }
.dd { flex: none; width: 0; height: 0; border-left: 3px solid transparent; border-right: 3px solid transparent; border-top: 4px solid #111; }
.dd.low { transform: translateY(6px); }
.sep { flex: none; width: 1px; height: 28px; background: #bfbfbf; box-shadow: 1px 0 0 #eee; }
.grip { flex: none; width: 3px; height: 24px; background-image: radial-gradient(circle, #fafafa 1.1px, #a0a0a0 1.3px, transparent 1.6px); background-size: 3px 4px; }
.search { flex: none; width: 110px; height: 20px; box-sizing: border-box; background: #fcfcfc; border: 1px solid #b5b5b5; display: flex; align-items: center; justify-content: space-between; padding: 0 2px; }
.stxt { font-size: 12px; color: #9a9a9a; }
.noinput { position: absolute; left: 8px; top: 8px; width: 30px; height: 18px; background: #fff; border: 1px solid #888; font-size: 12px; line-height: 16px; color: #222; box-sizing: border-box; white-space: nowrap; }
.cue { position: relative; flex: none; height: 21px; background: #dadada; border-top: 1px solid #f0f0f0; border-bottom: 1px solid #8f8f8f; margin-top: -1px; display: flex; align-items: center; }
.cuetxt { margin-left: 5px; font-size: 13px; font-weight: 700; color: #111; line-height: 18px; }
.cuediv { position: absolute; top: 0; width: 1px; height: 21px; background: #f4f4f4; box-shadow: -1px 0 0 #c8c8c8; }
.cuediv.a { left: 699px; }
.cuediv.b { left: 1396px; }
.vbtn { position: absolute; top: 3px; left: 1419px; width: 16px; height: 16px; background: #8d979c; }
.vbtn2 { position: absolute; top: 1px; left: 1437px; }
.body { flex: 1; min-height: 0; display: flex; background: #212427; }
.left { flex: none; width: 40px; display: flex; background: #222; }
.res { flex: none; width: 31px; margin-left: 2px; background: #b9b9b9; box-shadow: inset 0 34px 0 #c7c7c7; display: flex; flex-direction: column; align-items: flex-start; }
.edge { flex: none; width: 7px; background: #eeeeee; box-shadow: inset 1px 0 0 #8a8a8a; }
.gear { margin: 9px 0 25px 8px; flex: none; }
.tab { flex: none; width: 29px; height: 40px; box-sizing: border-box; margin-left: 5px; padding: 4px 0 0 2px; background: #e8e8e8; border: 1px solid #8d8d8d; border-radius: 3px; overflow: hidden; }
.view { position: relative; flex: 1; min-width: 0; background: #212427; overflow: hidden; }
.scene { position: absolute; left: 0; top: 0; display: block; }
.tri { font: 12px "Liberation Sans", sans-serif; }
.xc { fill: #b34040; }
.zc { fill: #2444c8; }
.yc { fill: #3a9a3a; }
.menu { position: absolute; box-sizing: border-box; background: #e6e6e6; border: 1px solid #6e6e6e; padding: 1px; color: #1c1c1c; box-shadow: 1px 1px 2px rgba(0,0,0,.35); font-size: 12px; }
.m1 { left: 27px; top: 3px; width: 222px; height: 698px; z-index: 2; }
.m2 { left: 248px; top: 251px; width: 178px; height: 700px; z-index: 3; }
.mi { position: relative; height: 30px; display: flex; align-items: center; }
.msep { height: 1px; margin: 4px 12px 4px 11px; background: #b5b5b5; }
.mi.hl { background: #5b8ff0; color: #dfe9fb; }
.mi.dim { color: #8c8c8c; }
.mic { position: absolute; left: 3px; top: 3px; width: 24px; height: 24px; overflow: visible; }
.ml { position: absolute; left: 35px; white-space: pre; line-height: 18px; }
.m2 .ml { left: 34px; }
.cjk { font-size: 12px; }
.lat { font-family: "Liberation Mono", monospace; font-size: 12px; letter-spacing: -1.2px; }
.und { text-decoration: underline; }
.ms { position: absolute; right: 13px; }
.ma { position: absolute; right: 4px; top: 11px; width: 0; height: 0; border-left: 4px solid #111; border-top: 4px solid transparent; border-bottom: 4px solid transparent; }
.mi.hl .ma { border-left-color: #dfe9fb; }
.fmt { position: absolute; left: 2px; top: 0; width: 30px; height: 30px; }
.ft { position: absolute; left: 1px; top: 4px; font: 10.5px/12px "Liberation Sans", sans-serif; letter-spacing: -0.7px; color: #23235e; -webkit-text-stroke: 0.25px #23235e; }
.ftri { position: absolute; left: 18px; top: 17px; width: 0; height: 0; border-left: 7px solid #96208e; border-top: 5px solid transparent; border-bottom: 5px solid transparent; }
.tip { position: absolute; left: 425px; top: 814px; width: 271px; height: 27px; box-sizing: border-box; z-index: 4; background: #fbfbfb; border: 1px solid #c9c9c9; border-radius: 6px; padding-left: 4px; line-height: 23px; font-size: 12px; color: #1c1c1c; white-space: pre; }
.cursor { position: absolute; left: 329px; top: 813px; z-index: 5; }
</style>
